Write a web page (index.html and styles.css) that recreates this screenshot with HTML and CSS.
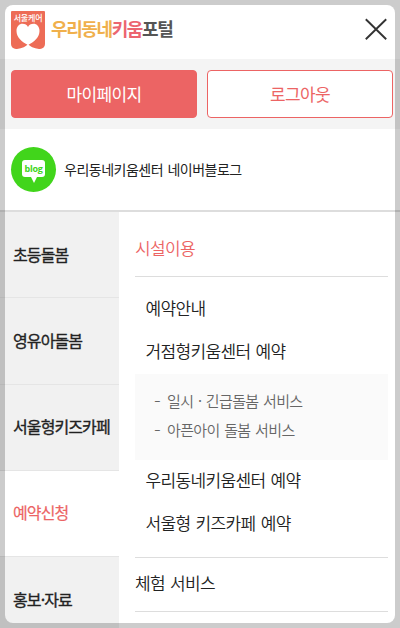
FILE: index.html
```html
<!DOCTYPE html>
<html lang="ko">
<head>
  <meta charset="UTF-8">
  <meta name="viewport" content="width=device-width, initial-scale=1.0">
  <title>우리동네키움포털</title>
  <link rel="stylesheet" href="styles.css">
</head>
<body>
  <div class="header">
    <div class="logo">
      <div class="logo-mark">
        <span>서울케어</span>
        <svg width="34" height="26" viewBox="0 0 34 26">
          <path fill="#fff" d="M17 22 C11 19 5.500 14.500 5.500 8 C5.500 3.500 8.300 .8 11.500 .8 C14 .8 16 2 17 4 C18 2 20 .8 22.500 .8 C25.700 .8 28.500 3.500 28.500 8 C28.500 14.500 23 19 17 22 Z"/>
          <path fill="#fff" d="M17 21 Q20 25 28 26 L6 26 Q14 25 17 21 Z"/>
        </svg>
      </div>
      <h1><span class="yellow">우리동네</span><span class="pink">키움</span>포털</h1>
    </div>
    <button class="close" aria-label="닫기">
      <svg width="24" height="24" viewBox="0 0 24 24">
        <path d="M1.800 1.300 L22.200 21.300 M22.200 1.300 L1.800 21.300" fill="none" stroke="#333" stroke-width="1.900"/>
      </svg>
    </button>
  </div>

  <div class="buttons">
    <a class="btn btn-fill">마이페이지</a>
    <a class="btn btn-line">로그아웃</a>
  </div>

  <div class="blog">
    <div class="blog-icon">
      <span>blog</span>
    </div>
    <a>우리동네키움센터 네이버블로그</a>
  </div>

  <div class="menu">
    <ul class="tabs">
      <li>초등돌봄</li>
      <li>영유아돌봄</li>
      <li>서울형키즈카페</li>
      <li class="active">예약신청</li>
      <li>홍보·자료</li>
    </ul>
    <div class="content">
      <h2 class="active">시설이용</h2>
      <ul class="links">
        <li>예약안내</li>
        <li>거점형키움센터 예약</li>
      </ul>
      <ul class="sub">
        <li><span class="dash">-</span>일시 · 긴급돌봄 서비스</li>
        <li><span class="dash">-</span>아픈아이 돌봄 서비스</li>
      </ul>
      <ul class="links last">
        <li>우리동네키움센터 예약</li>
        <li>서울형 키즈카페 예약</li>
      </ul>
      <h2 class="more">체험 서비스</h2>
    </div>
  </div>

  <div class="frame"></div>
</body>
</html>
```

FILE: styles.css
```css
* {
  box-sizing: border-box;
}
body {
  margin: 0;
  height: 628px;
  overflow: hidden;
  font-family: "Noto Sans CJK KR", "Noto Sans", sans-serif;
  letter-spacing: -0.04em;
  word-spacing: 1px;
  background: #fff;
  color: #222;
}
ul {
  list-style: none;
  margin: 0;
  padding: 0;
}
.header {
  display: flex;
  justify-content: space-between;
  align-items: center;
  height: 59px;
  padding: 0 12px 0 11px;
}
.logo {
  display: flex;
  align-items: center;
  gap: 6px;
}
.logo-mark {
  width: 34px;
  height: 38px;
  border-radius: 1px 1px 5px 5px;
  background: #ed6c56;
  overflow: hidden;
}
.logo-mark span {
  display: block;
  height: 12px;
  padding-top: 1px;
  font-size: 8px;
  font-weight: 500;
  line-height: 11px;
  letter-spacing: -0.2px;
  text-align: center;
  color: #fff;
}
.logo-mark svg {
  display: block;
}
.logo h1 {
  margin: 0;
  padding-bottom: 3px;
  font-size: 18px;
  font-weight: 700;
  line-height: 26px;
  letter-spacing: -1.4px;
  color: #555;
}
.logo .yellow {
  color: #f0b04c;
}
.logo .pink {
  color: #ec6570;
}
.close {
  width: 24px;
  height: 24px;
  padding: 0;
  border: none;
  background: none;
}
.close svg {
  display: block;
}
.buttons {
  display: grid;
  grid-template-columns: 1fr 1fr;
  gap: 10px;
  height: 70px;
  padding: 11px 7px 11px 11px;
  background: #f4f4f4;
}
.btn {
  display: flex;
  align-items: center;
  justify-content: center;
  padding-bottom: 2px;
  border: 1px solid #ec6464;
  border-radius: 4px;
  font-size: 17px;
}
.btn-fill {
  background: #ec6464;
  color: #fff;
}
.btn-line {
  background: #fff;
  color: #ec6464;
}
.blog {
  display: flex;
  align-items: center;
  gap: 8px;
  height: 83px;
  padding-left: 11px;
  border-bottom: 2px solid #ddd;
  font-size: 14px;
  letter-spacing: -0.5px;
}
.blog a {
  padding-bottom: 2px;
}
.blog-icon {
  display: flex;
  flex-direction: column;
  align-items: center;
  width: 45px;
  height: 45px;
  padding-top: 13px;
  border-radius: 50%;
  background: #41d51b;
}
.blog-icon span {
  width: 23px;
  height: 17px;
  border-radius: 3px;
  background: #fff;
  color: #41d51b;
  font: 700 9px/17px "Open Sans", sans-serif;
  letter-spacing: -0.3px;
  text-align: center;
}
.blog-icon::after {
  content: "";
  border: 3px solid transparent;
  border-top: 6px solid #fff;
  border-bottom: 0;
}
.menu {
  display: flex;
}
.tabs {
  flex: 0 0 118.5px;
}
.tabs li {
  display: flex;
  align-items: center;
  height: 86.25px;
  padding: 0 0 2px 13px;
  border-bottom: 1px solid #e5e5e5;
  background: #f1f1f1;
  font-size: 16px;
  font-weight: 400;
  letter-spacing: -0.9px;
  -webkit-text-stroke: 0.35px;
  white-space: nowrap;
}
.tabs li.active {
  background: #fff;
  color: #ec6464;
  -webkit-text-stroke: 0.2px;
}
.content {
  flex: 1;
  padding: 0 12px 0 16.5px;
}
.content h2 {
  margin: 0;
  border-bottom: 1px solid #ddd;
  font-size: 17px;
  font-weight: 350;
}
.content h2.active {
  height: 65px;
  line-height: 71px;
  color: #ec6464;
}
.content h2.more {
  height: 54px;
  line-height: 50px;
}
.links {
  height: 97px;
  padding: 9px 0 0 10.5px;
  font-size: 17px;
  font-weight: 350;
}
.links li {
  height: 43px;
  line-height: 43px;
}
.links.last {
  height: 98px;
  padding: 0;
  border-bottom: 1px solid #ddd;
}
.links.last li {
  padding-left: 10.5px;
  line-height: 39px;
}
.sub {
  height: 86px;
  padding: 13px 0 0 19px;
  background: #fafafa;
  color: #666;
  font-size: 15px;
  font-weight: 350;
}
.sub li {
  display: flex;
  height: 29px;
  line-height: 28px;
}
.dash {
  width: 13px;
  transform: scaleX(1.3);
  transform-origin: left;
}
/* dimmed edge laid over the whole menu */
.frame {
  position: fixed;
  inset: 5px;
  border-radius: 8px;
  box-shadow: 0 0 0 20px rgba(0, 0, 0, 0.2);
  pointer-events: none;
}
```
